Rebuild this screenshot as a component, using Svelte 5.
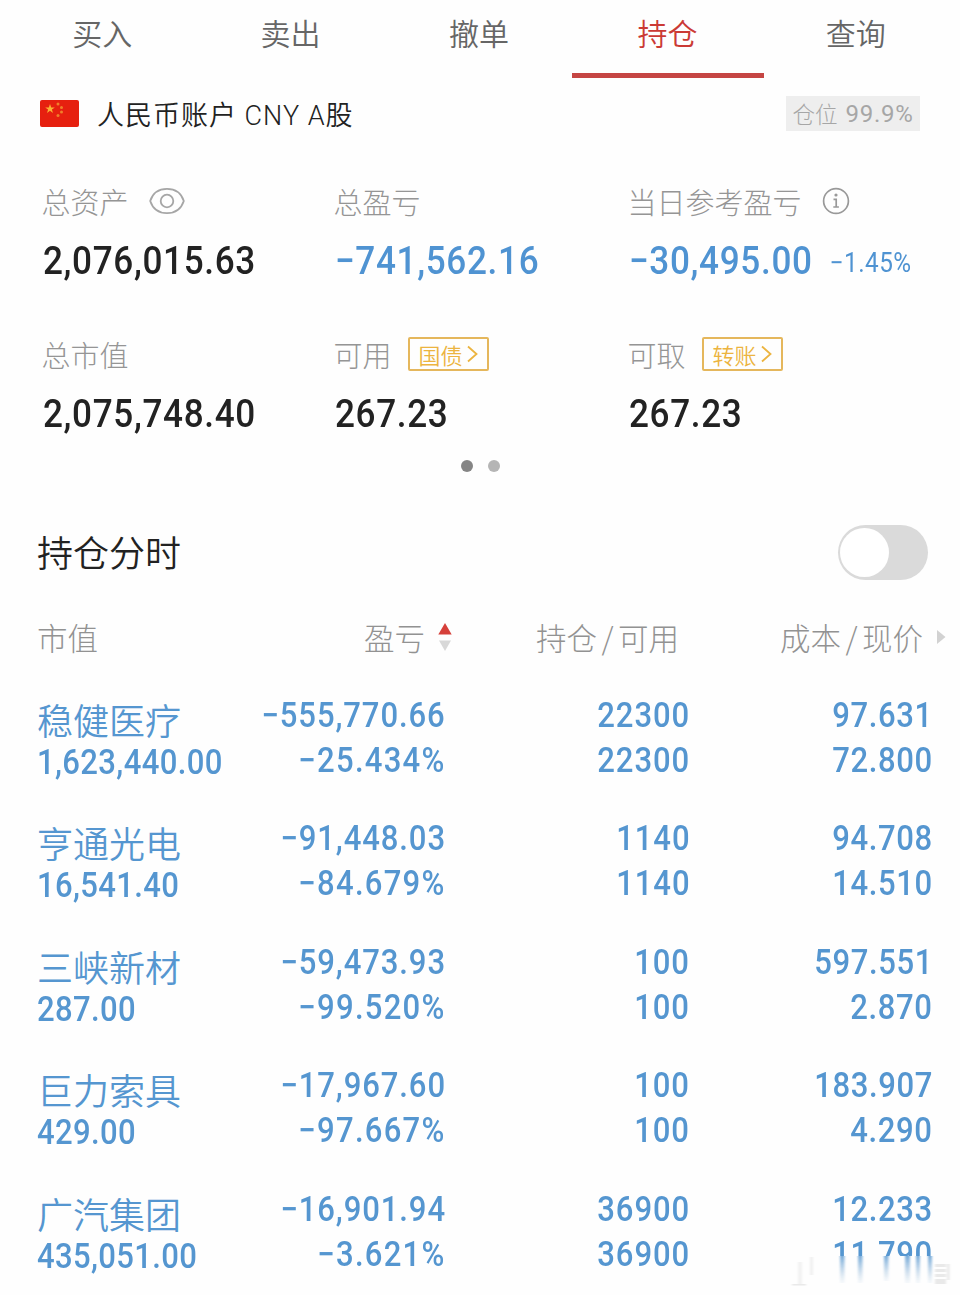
<script lang="ts">
	type Holding = {
		name: string;
		marketValue: string;
		profit: string;
		profitRate: string;
		position: string;
		available: string;
		cost: string;
		price: string;
	};

	const tabs = ['买入', '卖出', '撤单', '持仓', '查询'];
	let activeTab = $state('持仓');
	let showChart = $state(false);

	const holdings: Holding[] = [
		{ name: '稳健医疗', marketValue: '1,623,440.00', profit: '−555,770.66', profitRate: '−25.434%', position: '22300', available: '22300', cost: '97.631', price: '72.800' },
		{ name: '亨通光电', marketValue: '16,541.40', profit: '−91,448.03', profitRate: '−84.679%', position: '1140', available: '1140', cost: '94.708', price: '14.510' },
		{ name: '三峡新材', marketValue: '287.00', profit: '−59,473.93', profitRate: '−99.520%', position: '100', available: '100', cost: '597.551', price: '2.870' },
		{ name: '巨力索具', marketValue: '429.00', profit: '−17,967.60', profitRate: '−97.667%', position: '100', available: '100', cost: '183.907', price: '4.290' },
		{ name: '广汽集团', marketValue: '435,051.00', profit: '−16,901.94', profitRate: '−3.621%', position: '36900', available: '36900', cost: '12.233', price: '11.790' },
	];
</script>

{#snippet chevron()}
	<svg width="11" height="18" viewBox="0 0 11 18" fill="none" stroke="currentColor" stroke-width="1.8">
		<path d="M1 1.5 9.5 9 1 16.5" />
	</svg>
{/snippet}

<div class="page">
	<nav class="tabs">
		{#each tabs as tab}
			<button class="tab" class:active={tab === activeTab} onclick={() => (activeTab = tab)}>{tab}</button>
		{/each}
	</nav>

	<div class="account">
		<svg class="flag" width="39" height="27" viewBox="0 0 39 27">
			<rect width="39" height="27" rx="2" fill="#e6200f" />
			<path d="M10 4l1.2 3.4h3.6l-2.9 2.1 1.1 3.4-3-2.1-3 2.1 1.1-3.4-2.9-2.1h3.6z" fill="#fbb034" />
			<g fill="#f0802a">
				<circle cx="18" cy="4" r="1.5" />
				<circle cx="21.5" cy="7.5" r="1.5" />
				<circle cx="21.5" cy="12" r="1.5" />
				<circle cx="18" cy="15.5" r="1.5" />
			</g>
		</svg>
		<span class="account-name">人民币账户 CNY A股</span>
		<span class="ratio">仓位 <span>99.9%</span></span>
	</div>

	<section class="summary">
		<div class="cell">
			<div class="label">
				总资产
				<svg class="eye" width="36" height="28" viewBox="0 0 36 28" fill="none" stroke="#a6a6a6" stroke-width="1.8">
					<path d="M1.2 14C3.6 6.6 9.5 1.9 18 1.9S32.4 6.6 34.8 14C32.4 21.4 26.5 26.1 18 26.1S3.6 21.4 1.2 14z" />
					<circle cx="18" cy="14" r="6.3" />
				</svg>
			</div>
			<div class="value">2,076,015.63</div>
		</div>
		<div class="cell">
			<div class="label">总盈亏</div>
			<div class="value loss">−741,562.16</div>
		</div>
		<div class="cell">
			<div class="label">
				当日参考盈亏
				<svg class="info" width="28" height="28" viewBox="0 0 28 28" fill="none" stroke="#999" stroke-width="1.7">
					<circle cx="14" cy="14" r="12.4" />
					<path d="M11.5 12.3h2.7v7.4M11.3 20h5.6" />
					<circle cx="14" cy="8" r="1.6" fill="#999" stroke="none" />
				</svg>
			</div>
			<div class="value loss">−30,495.00<small>−1.45%</small></div>
		</div>
		<div class="cell">
			<div class="label">总市值</div>
			<div class="value">2,075,748.40</div>
		</div>
		<div class="cell">
			<div class="label">可用 <button class="link">国债{@render chevron()}</button></div>
			<div class="value">267.23</div>
		</div>
		<div class="cell">
			<div class="label">可取 <button class="link">转账{@render chevron()}</button></div>
			<div class="value">267.23</div>
		</div>
	</section>

	<div class="dots"><i class="on"></i><i></i></div>

	<div class="chart-row">
		<span>持仓分时</span>
		<button class="toggle" class:checked={showChart} aria-label="持仓分时" onclick={() => (showChart = !showChart)}><i></i></button>
	</div>

	<div class="list-head">
		<span class="first">市值</span>
		<span class="with-icon">
			盈亏
			<svg width="14" height="28" viewBox="0 0 14 28">
				<path d="M7 0l6.7 11.5H.3z" fill="#d6403a" />
				<path d="M7 28l6-10.5H1z" fill="#d8d8d8" />
			</svg>
		</span>
		<span>持仓<em>/</em>可用</span>
		<span class="with-icon last">
			<span>成本<em>/</em>现价</span>
			<svg width="9" height="14" viewBox="0 0 9 14"><path d="M0 0l8.5 7L0 14z" fill="#d2d2d2" /></svg>
		</span>
	</div>

	<div class="list">
		{#each holdings as h}
			<div class="row">
				<div class="stock">
					<span class="name">{h.name}</span>
					<span class="market">{h.marketValue}</span>
				</div>
				<div class="pair"><span>{h.profit}</span><span class="rate">{h.profitRate}</span></div>
				<div class="pair"><span>{h.position}</span><span>{h.available}</span></div>
				<div class="pair price"><span>{h.cost}</span><span>{h.price}</span></div>
			</div>
		{/each}
	</div>

	<!-- frosted strip over the bottom right corner -->
	<svg class="haze" width="168" height="35" viewBox="0 0 168 35">
		<defs>
			<linearGradient id="streak" x1="0" y1="0" x2="0" y2="1">
				<stop offset="0" stop-color="#5596d0" stop-opacity="0.8" />
				<stop offset="1" stop-color="#a9c4dc" stop-opacity="0.1" />
			</linearGradient>
			<filter id="soft" x="-10%" y="-10%" width="120%" height="120%">
				<feGaussianBlur stdDeviation="0.9 0.4" />
			</filter>
		</defs>
		<rect width="168" height="35" fill="#fefefe" />
		<g fill="url(#streak)" filter="url(#soft)">
			<rect x="56" y="0" width="4.5" height="27" />
			<rect x="74" y="0" width="4.5" height="27" />
			<rect x="100" y="0" width="4.5" height="25" />
			<rect x="121" y="0" width="5" height="27" />
			<rect x="132" y="0" width="4" height="27" />
			<rect x="144" y="0" width="4" height="27" />
		</g>
		<g fill="#e9e9e9" filter="url(#soft)">
			<rect x="14" y="6" width="4" height="22" opacity="0.6" />
			<rect x="26" y="1" width="3" height="18" opacity="0.7" />
			<rect x="8" y="28" width="14" height="1.5" />
			<rect x="151" y="8" width="11" height="3" />
			<rect x="151" y="13" width="11" height="3" />
			<rect x="151" y="18" width="11" height="3" />
			<rect x="151" y="23" width="11" height="5" />
			<rect x="163" y="8" width="2.5" height="16" />
		</g>
	</svg>
</div>

<style>
	:global(body) {
		background: #fefefe;
	}
	.page {
		position: relative;
		width: 960px;
		height: 1295px;
		overflow: hidden;
		box-sizing: border-box;
		font-family: 'Noto Sans CJK SC', sans-serif;
		font-weight: 300;
		color: #222;
	}
	button {
		border: 0;
		padding: 0;
		background: none;
		font: inherit;
		color: inherit;
	}
	svg {
		display: block;
		flex-shrink: 0;
	}
	.tabs {
		display: grid;
		grid-template-columns: repeat(5, 1fr);
		height: 78px;
		padding: 0 10px 0 8px;
	}
	.tab {
		position: relative;
		height: 78px;
		padding-bottom: 13px;
		font-size: 30px;
		font-weight: 350;
		line-height: 65px;
		color: #666;
	}
	.tab.active {
		color: #cb3a35;
	}
	.tab.active::after {
		content: '';
		position: absolute;
		left: -1px;
		right: -2px;
		bottom: 0;
		height: 5px;
		background: #c54543;
	}
	.account {
		display: flex;
		align-items: center;
		height: 35px;
		margin-top: 18px;
		padding: 0 40px;
	}
	.account-name {
		margin-left: 18px;
		padding-top: 6px;
		font-family: Roboto, 'Noto Sans CJK SC', sans-serif;
		font-size: 27px;
		font-weight: 350;
		line-height: 35px;
		letter-spacing: 1px;
	}
	.ratio {
		display: flex;
		justify-content: center;
		gap: 8px;
		width: 134px;
		height: 35px;
		margin-left: auto;
		background: #eee;
		font-size: 22.5px;
		line-height: 34px;
		color: #a6a6a6;
	}
	.ratio span {
		font-family: Roboto, sans-serif;
		font-size: 24px;
		font-weight: 400;
		line-height: 36px;
		letter-spacing: 0.7px;
	}
	.summary {
		display: grid;
		grid-template-columns: 292px 294px 1fr;
		row-gap: 51px;
		margin-top: 50px;
		padding-left: 41.5px;
	}
	.cell {
		height: 102px;
	}
	.label {
		display: flex;
		align-items: center;
		height: 40px;
		font-size: 29px;
		line-height: 36px;
		color: #959595;
	}
	.eye {
		margin-left: 20px;
	}
	.info {
		margin-left: 20px;
	}
	.link {
		display: flex;
		align-items: center;
		justify-content: center;
		gap: 4px;
		box-sizing: border-box;
		width: 81px;
		height: 34px;
		margin-left: 16px;
		border: 2px solid #e5b75c;
		border-radius: 2px;
		font-size: 22px;
		font-weight: 350;
		line-height: 26px;
		color: #ecb440;
	}
	/* condensed digits */
	.value {
		width: max-content;
		margin-top: 20px;
		padding-left: 1px;
		font-family: Roboto, sans-serif;
		font-size: 39px;
		font-weight: 500;
		line-height: 40px;
		letter-spacing: 0.75px;
		white-space: nowrap;
		transform: scaleX(0.9);
		transform-origin: left;
	}
	.value small {
		position: relative;
		top: -2px;
		margin-left: 19px;
		font-size: 27px;
		font-weight: 400;
		letter-spacing: 0.5px;
	}
	.loss {
		color: #4f93d2;
	}
	.dots {
		display: flex;
		justify-content: center;
		gap: 15px;
		margin-top: 24px;
		padding-left: 1px;
	}
	.dots i {
		width: 12px;
		height: 12px;
		border-radius: 50%;
		background: #b5b5b5;
	}
	.dots i.on {
		background: #858585;
	}
	.chart-row {
		display: flex;
		align-items: center;
		justify-content: space-between;
		height: 55px;
		margin-top: 53px;
		padding: 0 32px 0 37px;
		font-size: 36px;
		font-weight: 350;
		line-height: 50px;
	}
	.chart-row span {
		margin-top: -4px;
	}
	.toggle {
		width: 90px;
		height: 55px;
		padding: 3px 2px;
		border-radius: 28px;
		background: #dadada;
	}
	.toggle i {
		display: block;
		width: 49px;
		height: 49px;
		border-radius: 50%;
		background: #fff;
	}
	.toggle.checked i {
		margin-left: auto;
	}
	.list-head {
		display: grid;
		grid-template-columns: 226px 226px 227px 1fr;
		height: 40px;
		margin-top: 37px;
		padding: 0 14px 0 0;
		font-size: 30.5px;
		line-height: 40px;
		color: #929292;
		text-align: right;
	}
	.list-head .first {
		padding-left: 37px;
		text-align: left;
	}
	.list-head em {
		margin: 0 4.5px;
		font-style: normal;
	}
	.with-icon {
		display: flex;
		align-items: center;
		justify-content: flex-end;
		gap: 13px;
	}
	.with-icon.last {
		gap: 14px;
	}
	.list {
		padding: 36px 27px 0 37px;
	}
	.row {
		display: grid;
		grid-template-columns: 200px 209px 244px 1fr;
		height: 123.4px;
		font-family: Roboto, sans-serif;
		font-size: 34.5px;
		font-weight: 500;
		letter-spacing: 1px;
		color: #5596d0;
	}
	.stock,
	.pair {
		display: flex;
		flex-direction: column;
		line-height: 45px;
		white-space: nowrap;
	}
	.pair {
		align-items: flex-end;
	}
	.pair span {
		transform: scaleX(0.9);
		transform-origin: right;
	}
	.pair .rate {
		letter-spacing: 1.4px;
	}
	.price {
		letter-spacing: 0.7px;
	}
	.stock .name {
		padding-top: 5px;
		font-family: 'Noto Sans CJK SC', sans-serif;
		font-size: 36px;
		font-weight: 350;
		line-height: 42px;
		letter-spacing: 0;
	}
	.stock .market {
		letter-spacing: 0.4px;
		transform: scaleX(0.9);
		transform-origin: left;
	}
	.haze {
		position: absolute;
		right: 8px;
		bottom: 4px;
	}
</style>
